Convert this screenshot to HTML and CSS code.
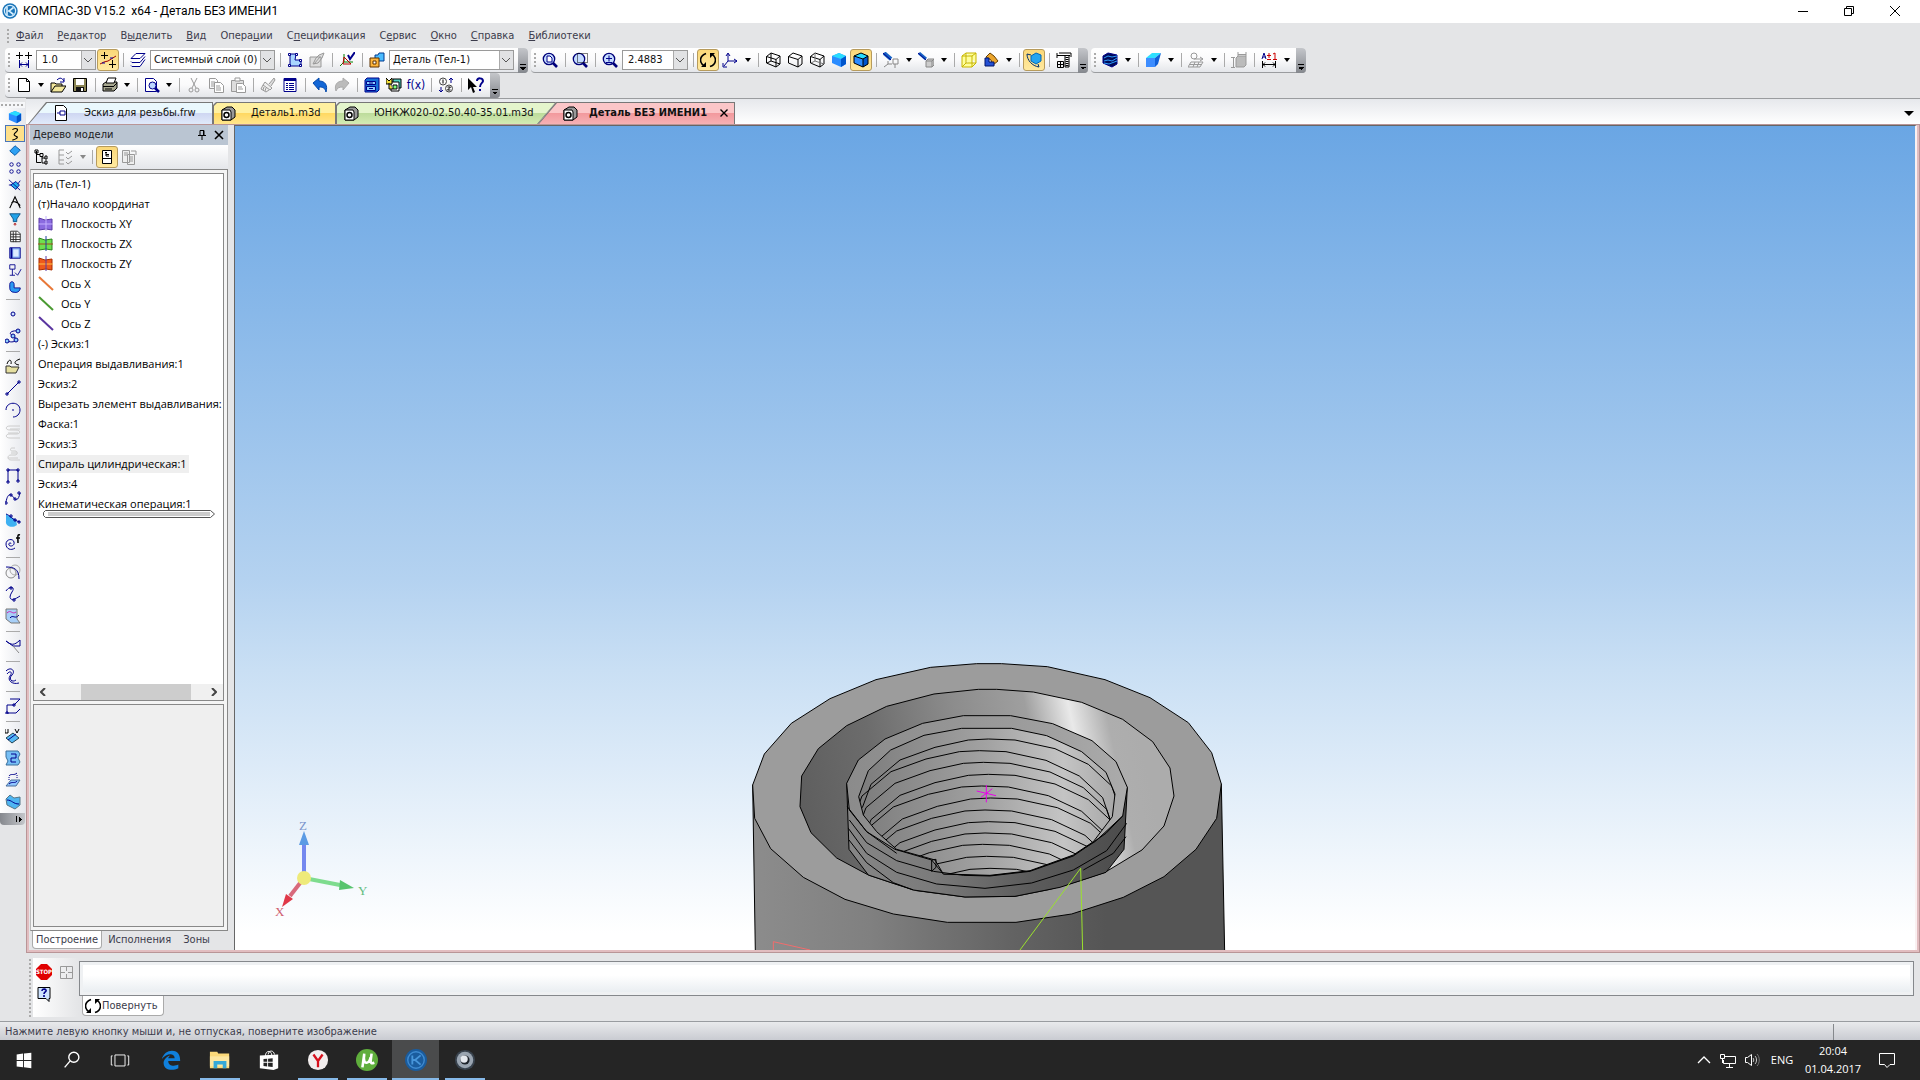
FILE: index.html
```html
<!DOCTYPE html>
<html lang="ru">
<head>
    <meta charset="UTF-8">
    <meta name="viewport" content="width=device-width, initial-scale=1.0">
    <title>КОМПАС-3D V15.2 x64 - Деталь БЕЗ ИМЕНИ1</title>
    <link rel="stylesheet" href="styles.css">
</head>
<body>

    <!-- shared icon shapes -->
    <svg class="sprite" aria-hidden="true">
        <symbol id="part" viewBox="0 0 16 16"><path d="M2 5l5-3h5l3 3v7l-4 3H2z" fill="#999" stroke="#000"/><path d="M2 5h8l1 2v8H2z" fill="#fff" stroke="#000"/><circle cx="6.500" cy="10" r="2.500" fill="none" stroke="#000" stroke-width="1.500"/></symbol>
        <symbol id="rotate" viewBox="0 0 16 16"><path d="M6 1.500C-1 4-1 11 4.500 14M10 14.500C17 12 17 5 11.500 2" fill="none" stroke="#000" stroke-width="1.600"/><path d="M1 15h5v-5zM15 1h-5v5z" fill="#000"/></symbol>
        <symbol id="kompas" viewBox="0 0 16 16"><circle cx="8" cy="8" r="7.700" fill="#1b75b8"/><circle cx="8" cy="8" r="5.600" fill="none" stroke="#d7efff" stroke-width="1.200"/><path d="M5 4v8M11.500 4.500L7 8l4.500 3.500M6 8h2" fill="none" stroke="#d7efff" stroke-width="1.600"/></symbol>
        <symbol id="lens" viewBox="0 0 16 16"><path d="M11 11l4 4" stroke="#00007a" stroke-width="2.600"/><circle cx="7" cy="7" r="5.700" fill="#c5dcff" stroke="#00007a" stroke-width="1.300"/></symbol>
        <symbol id="cube" viewBox="0 0 16 16"><path d="M1 4l7-3 7 3v8l-5 3-9-4z" fill="#2b8cff"/><path d="M1 4l7-3 7 3-5 3z" fill="#28dcff"/><path d="M10 7l5-3v8l-5 3z" fill="#0055cc"/></symbol>
    </svg>

    <header class="titlebar">
        <svg class="icon"><use href="#kompas"/></svg>
        <h1>КОМПАС-3D V15.2&nbsp; x64 - Деталь БЕЗ ИМЕНИ1</h1>
        <div class="window-buttons">
            <button aria-label="Свернуть"><svg class="icon" viewBox="0 0 16 16"><path d="M3 8.500h10" stroke="#000"/></svg></button>
            <button aria-label="Восстановить"><svg class="icon" viewBox="0 0 16 16"><path d="M3.500 5.500h7v7h-7zM5.500 5.500v-2h7v7h-2" stroke="#000"/></svg></button>
            <button aria-label="Закрыть"><svg class="icon" viewBox="0 0 16 16"><path d="M3 3l10 10M13 3L3 13" stroke="#000"/></svg></button>
        </div>
    </header>

    <nav class="menubar">
        <span class="grip"></span>
        <button><u>Ф</u>айл</button>
        <button><u>Р</u>едактор</button>
        <button>В<u>ы</u>делить</button>
        <button><u>В</u>ид</button>
        <button>Опера<u>ц</u>ии</button>
        <button>С<u>п</u>ецификация</button>
        <button>С<u>е</u>рвис</button>
        <button><u>О</u>кно</button>
        <button><u>С</u>правка</button>
        <button><u>Б</u>иблиотеки</button>
    </nav>

    <div class="toolbars">
        <div class="toolbar">
            <span class="grip"></span>
            <button class="tool" aria-label="Шаг курсора"><svg class="icon" viewBox="0 0 16 16"><path d="M3.500 0v7M0 3.500h7M12.500 0v7M9 3.500h7" stroke="#000"/><path d="M3.500 8v8M12.500 8v8M4 12.500h8M6 10.500l-2 2 2 2M10 10.500l2 2-2 2"/></svg></button>
            <select class="combo combo-short" aria-label="Шаг"><option>1.0</option></select>
            <button class="tool active" aria-label="Привязки"><svg class="icon" viewBox="0 0 16 16"><path d="M4.500 0v7M1 3.500h7M12.500 8v8M9 12.500h7" stroke="#000"/><path d="M0 12l4-2 4-1 8-5" stroke="#a00000"/><path d="M2 11h3M10 6h3" stroke="#00a"/></svg></button>
            <span class="sep"></span>
            <button class="tool" aria-label="Слои"><svg class="icon" viewBox="0 0 16 16"><path d="M6 1.500h9l-5 5H1zM1 9.500l1 1h8l5-6M1 13.500l1 1h8l5-7" fill="#fff"/></svg></button>
            <select class="combo" aria-label="Слой"><option>Системный слой (0)</option></select>
            <span class="sep"></span>
            <button class="tool" aria-label="Эскиз"><svg class="icon" viewBox="0 0 16 16"><path d="M3 2h6l-1 6h6v6H3z" fill="#a9d5ff"/><path d="M1.500 1.500h2v2h-2zM8.500 1.500h2v2h-2zM12.500 7.500h2v2h-2zM1.500 12.500h2v2h-2zM12.500 12.500h2v2h-2z" fill="#fff"/></svg></button>
            <button class="tool" aria-label="Редактировать эскиз"><svg class="icon gray" viewBox="0 0 16 16"><path d="M1 5h11v10H1zM4 12l3-6 3-3 5-2-2 5-4 5z" fill="#ddd"/><path d="M5 12l6-7"/></svg></button>
            <span class="sep"></span>
            <button class="tool" aria-label="Координаты"><svg class="icon" viewBox="0 0 16 16"><path d="M5 2v8l-4 4M5 10h9" stroke="#008000"/><path d="M5 5l7 7H4z" stroke="#b00"/><path d="M9 3l2 4 5-7" stroke-width="2"/></svg></button>
            <span class="sep"></span>
            <button class="tool" aria-label="Деталь"><svg class="icon" viewBox="0 0 16 16"><path d="M6 3h3l1-2h5v8H6z" fill="#4bbcff" stroke="#003a90"/><path d="M1 6h9v9H1z" fill="#ffb63c" stroke="#5d3100"/><path d="M4 9h3v3H4z" fill="#fff" stroke="#5d3100"/></svg></button>
            <select class="combo" aria-label="Состав"><option>Деталь (Тел-1)</option></select>
            <button class="overflow" aria-label="Ещё"></button>
        </div>

        <div class="toolbar">
            <span class="grip"></span>
            <button class="tool" aria-label="Показать всё"><svg class="icon" viewBox="0 0 16 16"><use href="#lens"/><path d="M5 4h3l2 2v4H5z" fill="#fff"/></svg></button>
            <span class="sep"></span>
            <button class="tool" aria-label="Рамкой"><svg class="icon" viewBox="0 0 16 16"><use href="#lens"/><path d="M5.500 1.500h10v9h-10z" stroke="#000" stroke-dasharray="1 1"/></svg></button>
            <span class="sep"></span>
            <button class="tool" aria-label="Масштаб"><svg class="icon" viewBox="0 0 16 16"><use href="#lens"/><path d="M4 6.500h6M7 3.500v6M4 10.500h6"/></svg></button>
            <select class="combo combo-scale" aria-label="Значение масштаба"><option>2.4883</option></select>
            <span class="sep"></span>
            <button class="tool active" aria-label="Повернуть"><svg class="icon"><use href="#rotate"/></svg></button>
            <button class="tool" aria-label="Ориентация"><svg class="icon" viewBox="0 0 16 16"><path d="M6 9V2M6 9h9M6 9l-4 5M4 4l2-3 2 3M12 7l3 2-3 2M1 11v4h4"/></svg></button>
            <button class="drop" aria-label="Список ориентаций"></button>
            <span class="sep"></span>
            <button class="tool" aria-label="Каркас"><svg class="icon" viewBox="0 0 16 16"><path d="M1.500 4.500L6 1l9 3v8l-4 3-9.500-4zM1.500 4.500L11 7.500l4-3.500M11 7.500V15M6 1v8l-4 2M6 9l9 3" stroke="#000"/></svg></button>
            <button class="tool" aria-label="Без невидимых линий"><svg class="icon" viewBox="0 0 16 16"><path d="M1.500 4.500L6 1l9 3v8l-4 3-9.500-4zM1.500 4.500L11 7.500l4-3.500M11 7.500V15" stroke="#000"/></svg></button>
            <button class="tool" aria-label="Невидимые линии тонкие"><svg class="icon" viewBox="0 0 16 16"><path d="M1.500 4.500L6 1l9 3v8l-4 3-9.500-4zM1.500 4.500L11 7.500l4-3.500M11 7.500V15" stroke="#000"/><path d="M6 1v8l-4 2M6 9l9 3" stroke="#777"/></svg></button>
            <button class="tool" aria-label="Полутоновое"><svg class="icon"><use href="#cube"/></svg></button>
            <button class="tool active" aria-label="Полутоновое с каркасом"><svg class="icon" viewBox="0 0 16 16"><use href="#cube"/><path d="M1 4l7-3 7 3v8l-5 3-9-4zM1 4l9 3 5-3M10 7v8" stroke="#000"/></svg></button>
            <span class="sep"></span>
            <button class="tool" aria-label="Скрыть объекты"><svg class="icon" viewBox="0 0 16 16"><path d="M1 1l7 6" stroke="#1762c4" stroke-width="4"/><path d="M0 1l8 7"/><path d="M10 7h5v5h-5zM12 12v4M5 9v3l-4 3M5 12h4" stroke="#888"/></svg></button>
            <button class="drop" aria-label="Список объектов"></button>
            <button class="tool" aria-label="Скрыть грани"><svg class="icon" viewBox="0 0 16 16"><path d="M1 1l7 6" stroke="#1762c4" stroke-width="3"/><path d="M0 1l8 7"/><path d="M8 9l2-2h6v6l-2 2H8zM8 9h6v6M14 9l2-2" fill="#ccc" stroke="#888"/></svg></button>
            <button class="drop" aria-label="Список граней"></button>
            <span class="sep"></span>
            <button class="tool" aria-label="Габарит"><svg class="icon" viewBox="0 0 16 16"><path d="M1 4l4-3h10v10l-4 4H1zM1 4h10v11M11 4l4-3M5 1v10H15M5 11l-4 4" fill="#ffff9b" stroke="#c7b500"/></svg></button>
            <button class="tool" aria-label="Сечение"><svg class="icon" viewBox="0 0 16 16"><path d="M3 5l4-4 4 3 4 5-5 4-2-5z" fill="#eba52c" stroke="#684000"/><path d="M2 6h4v4h5v4H2z" fill="#2450d4" stroke="#00146b"/></svg></button>
            <button class="drop" aria-label="Список сечений"></button>
            <span class="sep"></span>
            <button class="tool active" aria-label="Перестроить"><svg class="icon" viewBox="0 0 16 16"><path d="M5 4l5-3 5 2v6l-5 3-5-3z" fill="#26a5f0" stroke="#0067b8"/><path d="M1 2c0 6 5 12 12 13M1 2l4 1M13 15l-1-3" stroke="#003070"/></svg></button>
            <span class="sep"></span>
            <button class="tool" aria-label="Размеры"><svg class="icon" viewBox="0 0 16 16"><path d="M1 3.500h13M1 1v5M3 1h12v4M9 3v12h4V4M1.500 9.500h6v6h-6zM1.500 12.500h6M4.500 9.500v6" stroke="#000"/><path d="M11 5v10" stroke="#000" stroke-width="3" stroke-dasharray="1 1"/></svg></button>
            <button class="overflow" aria-label="Ещё"></button>
        </div>

        <div class="toolbar">
            <span class="grip"></span>
            <button class="tool" aria-label="Материал"><svg class="icon" viewBox="0 0 16 16"><path d="M1 4l5-3 9 2v9l-5 3-9-4z" fill="#000b58"/><path d="M2 6l4-2 4 1 5-1M2 9l4-1 4 1 5-3M2 11l5 1 8-3" stroke="#2e9cff"/></svg></button>
            <button class="drop" aria-label="Список материалов"></button>
            <span class="sep"></span>
            <button class="tool" aria-label="Выдавливание"><svg class="icon plain" viewBox="0 0 16 16"><path d="M1 6h9v9H1z" fill="#3d8dff"/><path d="M1 6l6-5h9l-6 5z" fill="#2ee0ff"/><path d="M10 6l6-5-3 11-3 3z" fill="#1060d8"/></svg></button>
            <button class="drop" aria-label="Список операций"></button>
            <span class="sep"></span>
            <button class="tool" aria-label="Вид"><svg class="icon gray" viewBox="0 0 16 16"><circle cx="6" cy="4" r="3"/><path d="M6 7h9M12 5l3 2-3 2M3 10h12l-3 5H0zM1 12.500h13M7 10l-2 5M11 10l-2 5"/></svg></button>
            <button class="drop" aria-label="Список видов"></button>
            <span class="sep"></span>
            <button class="tool" aria-label="Габаритные размеры"><svg class="icon gray" viewBox="0 0 16 16"><path d="M5 6l2-2h8v9l-2 2H5z" fill="#bbb"/><path d="M0 5.500h4M0 15.500h4M2.500 6v9M7 0v4M15 0v4M7 2.500h8"/></svg></button>
            <span class="sep"></span>
            <button class="tool" aria-label="Допуски"><svg class="icon" viewBox="0 0 16 16"><path d="M1 7l2-6 2 6M2 5h3"/><path d="M6 3.500h4M8 1v5M6 7.500h4M12 2l2-1v7M12 7.500h4" stroke="#c00"/><path d="M1.500 9v7M14.500 9v7M2 12.500h12M4 10.500l-2 2 2 2M12 10.500l2 2-2 2" stroke="#000"/></svg></button>
            <button class="drop" aria-label="Список допусков"></button>
            <button class="overflow" aria-label="Ещё"></button>
        </div>
    </div>

    <div class="toolbars">
        <div class="toolbar toolbar-file">
            <span class="grip"></span>
            <button class="tool" aria-label="Создать"><svg class="icon" viewBox="0 0 16 16"><path d="M2.500 1.500h8l3 3v10h-11zM10.500 1.500v3h3" fill="#fff" stroke="#000"/></svg></button>
            <button class="drop" aria-label="Список документов"></button>
            <button class="tool" aria-label="Открыть"><svg class="icon" viewBox="0 0 16 16"><path d="M1 6h4l1 1h6v2h4l-4 6H1z" fill="#f2e79b" stroke="#000"/><path d="M1 15l4-6h7" stroke="#000"/><path d="M7 3c3-3 5-2 7 1M14 1v4h-4"/></svg></button>
            <button class="tool" aria-label="Сохранить"><svg class="icon" viewBox="0 0 16 16"><path d="M1.500 1.500h13v13h-13z" fill="#8c8654" stroke="#000"/><path d="M4 2h8v6H4z" fill="#fff"  stroke="none"/><path d="M4 10h8v5H4z" fill="#111" stroke="none"/><path d="M9 11h2v3H9z" fill="#fff" stroke="none"/></svg></button>
            <span class="sep"></span>
            <button class="tool" aria-label="Печать"><svg class="icon" viewBox="0 0 16 16"><path d="M1 7l3-2h11v6l-3 3H1z" fill="#a8a890" stroke="#000"/><path d="M4 6l2-5h8l-2 5z" fill="#fff" stroke="#000"/><path d="M1 9.500h11M12 9l3-3M3 12h7" stroke="#000"/></svg></button>
            <button class="drop" aria-label="Параметры печати"></button>
            <span class="sep"></span>
            <button class="tool" aria-label="Просмотр"><svg class="icon" viewBox="0 0 16 16"><path d="M1.500 1.500h8l3 3v10h-11z" fill="#fff"/><circle cx="8.500" cy="8.500" r="3.500" fill="#bcd7ff"/><path d="M11 11l4 4" stroke-width="2.500"/></svg></button>
            <button class="drop" aria-label="Параметры просмотра"></button>
            <span class="sep"></span>
            <button class="tool" aria-label="Вырезать"><svg class="icon gray" viewBox="0 0 16 16"><path d="M5 1l5 10M11 1L6 11"/><circle cx="5" cy="13" r="2"/><circle cx="11" cy="13" r="2"/></svg></button>
            <button class="tool" aria-label="Копировать"><svg class="icon gray" viewBox="0 0 16 16"><path d="M1.500 1.500h6l2 2v8h-8zM3 5h4M3 7h4M3 9h4" /><path d="M6.500 5.500h6l3 3v7h-9z" fill="#fff"/><path d="M8 9h4M8 11h5M8 13h5"/></svg></button>
            <button class="tool" aria-label="Вставить"><svg class="icon gray" viewBox="0 0 16 16"><path d="M1.500 3.500h12v11h-12z" fill="#ddd"/><path d="M5 4V1h5v3z" fill="#fff"/><path d="M6.500 6.500h6l3 3v6h-9z" fill="#fff"/><path d="M8 10h4M8 12h5"/></svg></button>
            <span class="sep"></span>
            <button class="tool" aria-label="Копировать свойства"><svg class="icon gray" viewBox="0 0 16 16"><path d="M9 7l5-6 1 2-4 6" fill="#ddd"/><path d="M5 5l7 6-2 2-7-5zM3 8l-2 4 5 3 3-2M4 10l-1 3M6 11l-1 3" fill="#eee"/></svg></button>
            <button class="tool" aria-label="Свойства"><svg class="icon" viewBox="0 0 16 16"><path d="M2 1.500h12v13H2z" fill="#fff"/><path d="M2 2.500h12" stroke-width="3"/><path d="M4 6.500h2M7 6.500h5M4 8.500h2M7 8.500h5M4 10.500h2M7 10.500h5M4 12.500h2M7 12.500h5"/></svg></button>
            <span class="sep"></span>
            <button class="tool" aria-label="Отменить"><svg class="icon" viewBox="0 0 16 16"><path d="M1 6l6-5v3c6 0 9 4 7 11-1-4-3-5-7-5v3z" fill="#1266d6" stroke="#0047ab"/></svg></button>
            <button class="tool" aria-label="Повторить"><svg class="icon" viewBox="0 0 16 16"><path d="M15 6L9 1v3C3 4 0 8 2 14c1-3 3-4 7-4v3z" fill="#bbb" stroke="#aaa"/></svg></button>
            <span class="sep"></span>
            <button class="tool" aria-label="Библиотеки"><svg class="icon" viewBox="0 0 16 16"><path d="M1 3l2-2h12v12l-2 2H1z" fill="#1670d8"/><path d="M2.500 4.500h9v3h-9zM2.500 9.500h9v4h-9zM5 6h4M5 11.500h4" fill="#8fd0ff"/></svg></button>
            <button class="tool" aria-label="Переменные"><svg class="icon" viewBox="0 0 16 16"><path d="M7 2h8v9H7z" fill="#4fd0c0" stroke="#000"/><path d="M5 5h8v9H5z" fill="#fff" stroke="#000"/><path d="M0 1l3 3 3-3v6H0zM3 6v6h4" fill="#f2df39" stroke="#000"/><path d="M7 8h4v4H7z" fill="#7dff7d" stroke="#000"/></svg></button>
            <button class="tool fx" aria-label="Функции">f(x)</button>
            <span class="sep"></span>
            <button class="tool" aria-label="Порядок"><svg class="icon" viewBox="0 0 16 16"><circle cx="5" cy="4.500" r="3.500" stroke="#444"/><circle cx="11" cy="11.500" r="3.500" stroke="#444"/><path d="M5 2.500v4M9.500 10h3l-3 3h3" stroke="#000"/><path d="M13 1v5M11 3l2-2 2 2M3 10v5M1 13l2 2 2-2"/></svg></button>
            <span class="sep"></span>
            <button class="tool" aria-label="Справка"><svg class="icon" viewBox="0 0 16 16"><path d="M0 1v12l3-3 2 6 2-1-2-5h4z" fill="#000" stroke="none"/><path d="M9 4c0-4 6-3 6 0 0 2-3 2-3 6M12 12v2" stroke-width="2"/></svg></button>
            <button class="overflow" aria-label="Ещё"></button>
        </div>
    </div>

    <main class="workspace">
        <aside class="compact-panel">
            <span class="grip-top"></span>
            <div class="modes">
                <button aria-label="Редактирование детали"><svg class="icon"><use href="#cube"/></svg></button>
                <button class="active" aria-label="Пространственные кривые"><svg class="icon" viewBox="0 0 16 16"><path d="M5 3c5-3 8 0 4 3s-1 4 1 5-1 3-5 4" stroke="#000" stroke-width="1.300"/></svg></button>
                <button aria-label="Поверхности"><svg class="icon" viewBox="0 0 16 16"><path d="M2 8l6-6 6 5-6 6z" fill="#2ea1f3" stroke="#0052a0"/></svg></button>
                <button aria-label="Массивы"><svg class="icon" viewBox="0 0 16 16"><circle cx="4" cy="4" r="2"/><circle cx="12" cy="4" r="2"/><circle cx="4" cy="12" r="2"/><circle cx="12" cy="12" r="2"/></svg></button>
                <button aria-label="Вспомогательная геометрия"><svg class="icon" viewBox="0 0 16 16"><path d="M3 8l6-4 4 4-4 5z" fill="#24b2ef"/><path d="M1 2l13 12M14 3l-3 4M1 8h3"/></svg></button>
                <button aria-label="Измерения"><svg class="icon" viewBox="0 0 16 16"><path d="M2 15L8 2l6 13M4 9c2-2 6-2 10 3" stroke="#000" stroke-width="1.300"/></svg></button>
                <button aria-label="Фильтры"><svg class="icon" viewBox="0 0 16 16"><path d="M2 2h12l-4 6v3H6V8z" fill="#21a2e8" stroke="#0a4f80"/><circle cx="8" cy="14" r="1" stroke="#a00"/></svg></button>
                <button aria-label="Спецификация"><svg class="icon" viewBox="0 0 16 16"><path d="M3 2.500h8l3 3v9H3zM3 6h11M3 9h11M3 12h11M6 3v12M9 3v12" fill="#fff" stroke="#222"/></svg></button>
                <button aria-label="Отчёты"><svg class="icon" viewBox="0 0 16 16"><path d="M2 2h12v12H2z" fill="#8cb6f5"/><path d="M4 2v12" stroke-width="2"/><path d="M6 4h6v8H6z" fill="#dcecff" stroke="none"/></svg></button>
                <button aria-label="Элементы оформления"><svg class="icon" viewBox="0 0 16 16"><path d="M2 2h6v5H2zM5 7v7M2 14h6M8 11l3 3 4-7"/></svg></button>
                <button aria-label="Листовое тело"><svg class="icon" viewBox="0 0 16 16"><path d="M2 5c0-4 5-4 5 0v4h7c0 4-4 6-7 5-4 0-5-3-5-5z" fill="#2d9bf1"/></svg></button>
            </div>
            <span class="line"></span>
            <div class="tools">
                <button aria-label="Точка"><svg class="icon" viewBox="0 0 16 16"><circle cx="8" cy="8" r="2" fill="#cfe4ff"/></svg></button>
                <button aria-label="Группа точек"><svg class="icon" viewBox="0 0 16 16"><path d="M2 13c8 3 12-2 6-5S7 2 14 3"/><g fill="#8fd0ff"><circle cx="2" cy="13" r="2"/><circle cx="8" cy="8" r="2"/><circle cx="13" cy="3" r="2"/><circle cx="11" cy="12" r="2"/></g></svg></button>
            </div>
            <span class="line"></span>
            <div class="tools">
                <button aria-label="Кривая из файла"><svg class="icon" viewBox="0 0 16 16"><path d="M1 8h4l1 1h8l-3 6H1z" fill="#e5dfa0" stroke="#333"/><path d="M2 6c2-6 5-4 4 0M15 1c-6 2-7 5-1 6" stroke="#000"/></svg></button>
                <button aria-label="Отрезок"><svg class="icon" viewBox="0 0 16 16"><path d="M2 14L14 2"/><path d="M1 13h2v2H1zM13 1h2v2h-2z"/></svg></button>
                <button aria-label="Дуга"><svg class="icon" viewBox="0 0 16 16"><path d="M1 8c0-9 14-9 14 0 0 4-3 7-7 7"/><path d="M8 7v2"/></svg></button>
                <button aria-label="Спираль"><svg class="icon faint" viewBox="0 0 16 16"><path d="M15 2H5c-5 0-5 4 0 4h6c5 0 5 4 0 4H5c-5 0-5 4 0 4h10M15 5H5M13 9H3"/></svg></button>
                <button aria-label="Спираль коническая"><svg class="icon faint" viewBox="0 0 16 16"><path d="M10 2H7c-2 0-2 3 0 3h3c3 0 3 4 0 4H6c-4 0-4 5 0 5h9M6 7h6M3 12h10"/></svg></button>
                <button aria-label="Ломаная"><svg class="icon" viewBox="0 0 16 16"><path d="M3 14V2h10v11"/><path d="M2 1h2v2H2zM12 1h2v2h-2zM2 13h2v2H2zM12 12h2v2h-2z"/></svg></button>
                <button aria-label="Сплайн"><svg class="icon" viewBox="0 0 16 16"><path d="M1 12c2-10 5-8 8-4s5 0 6-5"/><path d="M0 12h2v2H0zM5 4h2v2H5zM9 8h2v2H9zM13 2h2v2h-2z"/></svg></button>
                <button aria-label="Сплайн на поверхности"><svg class="icon" viewBox="0 0 16 16"><path d="M1 2l10 6 1 5c-5 4-12 1-11-4z" fill="#3eb1f2" stroke="none"/><path d="M1 2c4 1 6 6 14 8"/><path d="M5 3h2v2H5zM9 7h2v2H9zM13 9h2v2h-2z"/></svg></button>
                <button aria-label="Кривая по закону"><svg class="icon" viewBox="0 0 16 16"><path d="M6 10c0-2-3-1-2 1s6 1 5-3-8-3-8 2 5 7 9 4"/><path d="M15 1c-3-1-2 2-2 8M11 4h4" stroke="#000" stroke-width="1.500"/></svg></button>
            </div>
            <span class="line"></span>
            <div class="tools">
                <button aria-label="Скругление"><svg class="icon" viewBox="0 0 16 16"><circle cx="6" cy="9" r="5" stroke="#888"/><circle cx="10" cy="6" r="5" stroke="#aaa"/><path d="M1 3c8 0 13 2 13 12"/></svg></button>
                <button aria-label="Соединение кривых"><svg class="icon" viewBox="0 0 16 16"><path d="M1 5c3-5 10-5 6 1s-2 11 8 4"/><path d="M5 1h2v2H5zM8 13h2v2H8z"/></svg></button>
                <button aria-label="Кривая на поверхности"><svg class="icon" viewBox="0 0 16 16"><path d="M1 1h11v10l3 4H6l-5-4z" fill="#a7cff8" stroke="#777"/><path d="M2 5c4-4 5 2 9-1" stroke="#d020b0"/><path d="M5 10c3-4 5 2 9-3"/></svg></button>
            </div>
            <span class="line"></span>
            <div class="tools">
                <button aria-label="Линия пересечения"><svg class="icon" viewBox="0 0 16 16"><path d="M1 3c5 4 8 5 14-1v6H8z"/><path d="M8 8l6 7" stroke="#888"/></svg></button>
            </div>
            <span class="line"></span>
            <div class="tools">
                <button aria-label="Эквидистанта"><svg class="icon" viewBox="0 0 16 16"><path d="M1 3c5-5 10 0 6 4s0 8 4 5M2 6c3-4 6-2 3 2s2 9 9 7"/></svg></button>
            </div>
            <span class="line"></span>
            <div class="tools">
                <button aria-label="Контур"><svg class="icon" viewBox="0 0 16 16"><path d="M5 1h10L9 7H2v8h9l4-4"/><path d="M8 6h2v2H8zM1 14h2v2H1z"/></svg></button>
            </div>
            <span class="line"></span>
            <div class="tools">
                <button aria-label="Изопараметрическая кривая"><svg class="icon" viewBox="0 0 16 16"><path d="M0 1v4h3V1M10 1l2 4 2-4" stroke="#000"/><path d="M1 10l7-5 6 5-7 5z" fill="#55b8f5" stroke="#245"/><path d="M3 12l8-6"/></svg></button>
                <button aria-label="Контур поверхности"><svg class="icon" viewBox="0 0 16 16"><path d="M1 1h12l2 3-2 4 2 4-2 3H1l2-4-2-4z" fill="#76bff5" stroke="#3a6f9a"/><path d="M6 4h5v4H6v4h5"/></svg></button>
                <button aria-label="Проекционная кривая"><svg class="icon" viewBox="0 0 16 16"><path d="M4 4c2-3 5 0 8-3" /><path d="M4 5v4M12 3v4" stroke-dasharray="1 1"/><path d="M1 14l5-6h9l-4 6z" fill="#8fc6ff" stroke="#4a6f9a"/><path d="M4 12c3-3 6 0 8-3"/></svg></button>
                <button aria-label="Линия разъёма"><svg class="icon" viewBox="0 0 16 16"><path d="M1 5l4-4 4 3 6-1v8l-5 4-8-4z" fill="#4eb5f2" stroke="#578"/><path d="M2 6c5 0 6 4 12 4"/></svg></button>
            </div>
            <button class="panel-end" aria-label="Развернуть панель"></button>
        </aside>

        <section class="document">
            <div class="doc-tabs">
                <button class="doc-tab tab-blue"><svg class="icon" viewBox="0 0 16 16"><path d="M2.500.5h8l3 3v12h-11z" fill="#fff" stroke="#000"/><path d="M7 6h5v4H7zM4 8h3"/></svg><span>Эскиз для резьбы.frw</span></button>
                <button class="doc-tab tab-yellow"><svg class="icon"><use href="#part"/></svg><span>Деталь1.m3d</span></button>
                <button class="doc-tab tab-green"><svg class="icon"><use href="#part"/></svg><span>ЮНКЖ020-02.50.40-35.01.m3d</span></button>
                <button class="doc-tab tab-red"><svg class="icon"><use href="#part"/></svg><span>Деталь БЕЗ ИМЕНИ1</span><svg class="close" viewBox="0 0 8 8"><path d="M.5.5l7 7M7.500.5l-7 7" stroke="#000" stroke-width="1.400"/></svg></button>
                <button class="tab-list" aria-label="Список документов"></button>
            </div>

            <div class="doc-body">
                <div class="side">
                    <div class="side-title">
                        <h2>Дерево модели</h2>
                        <button aria-label="Закрепить"><svg viewBox="0 0 10 10"><path d="M3 5.500V.5h4v5M1 5.500h8M5 6v4M6.500 1v4" stroke="#000"/></svg></button>
                        <button aria-label="Закрыть"><svg viewBox="0 0 10 10"><path d="M1 1l8 8M9 1L1 9" stroke="#000" stroke-width="1.600"/></svg></button>
                    </div>
                    <div class="side-tools">
                        <button class="tool" aria-label="Структура"><svg class="icon" viewBox="0 0 16 16"><path d="M2.500 2v11.500H7M3 5.500h3M6 4.500h3v3H6zM8 8v6M11 7h2v3h-2zM11 12h2v3h-2zM1 1h3v3H1zM8 9h3M8 14h3" stroke="#000"/></svg></button>
                        <button class="tool" aria-label="Состав"><svg class="icon gray" viewBox="0 0 16 16"><path d="M1 1h5M1 1v14M1 6h5M1 11h5M1 15h5M8 3l2 2 4-3M8 8l2 2 4-3M8 13l2 2 4-3"/></svg></button>
                        <button class="drop drop-gray" aria-label="Список состава"></button>
                        <span class="sep"></span>
                        <button class="tool active" aria-label="Дерево"><svg class="icon" viewBox="0 0 16 16"><path d="M3.500 1.500h9v13h-9zM3.500 9.500h9" fill="#fff" stroke="#000"/><path d="M6 3.500h2M7 4v3h3M7 5.500h3" stroke="#000"/></svg></button>
                        <button class="tool" aria-label="Отношения"><svg class="icon gray" viewBox="0 0 16 16"><path d="M1.500 1.500h7v12h-7zM6.500 5.500h7v10h-7z" fill="#eee"/><path d="M3 4h4M3 6h3M8 8h4M8 10h4M8 12h4M10 2h5v4"/></svg></button>
                    </div>
                    <div class="side-box">
                        <div class="tree-box">
                            <ul class="tree">
                                <li class="root">аль (Тел-1)</li>
                                <li><span>(т)Начало координат</span></li>
                                <li class="child"><svg class="icon" viewBox="0 0 16 16"><path d="M1 2l6 2 7-1v11l-6-1-7 1z" fill="#8b6be0" stroke="#5a3aa5"/><path d="M0 8h15M8 0v15" stroke="#c4b0ff"/></svg>Плоскость XY</li>
                                <li class="child"><svg class="icon" viewBox="0 0 16 16"><path d="M1 2l6 2 7-1v11l-6-1-7 1z" fill="#6fe04f" stroke="#2d8420"/><path d="M0 8h15" stroke="#a44a20"/><path d="M8 0v15" stroke="#1e40a0"/></svg>Плоскость ZX</li>
                                <li class="child"><svg class="icon" viewBox="0 0 16 16"><path d="M1 2l6 2 7-1v11l-6-1-7 1z" fill="#ee5a1c" stroke="#a62c00"/><path d="M0 8h15" stroke="#ffc04a"/><path d="M8 0v15" stroke="#5a3aa5"/></svg>Плоскость ZY</li>
                                <li class="child"><svg class="icon" viewBox="0 0 16 16"><path d="M1 1l14 13" stroke="#e87838" stroke-width="2"/></svg>Ось X</li>
                                <li class="child"><svg class="icon" viewBox="0 0 16 16"><path d="M1 1l14 13" stroke="#4b9a32" stroke-width="2"/></svg>Ось Y</li>
                                <li class="child"><svg class="icon" viewBox="0 0 16 16"><path d="M1 1l14 13" stroke="#5a35a0" stroke-width="2"/></svg>Ось Z</li>
                                <li><span>(-) Эскиз:1</span></li>
                                <li><span>Операция выдавливания:1</span></li>
                                <li><span>Эскиз:2</span></li>
                                <li><span>Вырезать элемент выдавливания:</span></li>
                                <li><span>Фаска:1</span></li>
                                <li><span>Эскиз:3</span></li>
                                <li><span class="selected">Спираль цилиндрическая:1</span></li>
                                <li><span>Эскиз:4</span></li>
                                <li><span>Кинематическая операция:1</span></li>
                            </ul>
                            <svg class="rollback" viewBox="0 0 172 8" preserveAspectRatio="none"><path d="M2.500.5h165l4 3.500-4 3.500h-165l-2-2v-3z" fill="#fff" stroke="#555"/><path d="M5 3h162M5 5h162" stroke="#999"/></svg>
                            <div class="hscroll">
                                <button aria-label="Влево"><svg viewBox="0 0 6 8"><path d="M5 0L1 4l4 4" stroke="#444" stroke-width="2"/></svg></button>
                                <span class="track"><span class="thumb"></span></span>
                                <button aria-label="Вправо"><svg viewBox="0 0 6 8"><path d="M1 0l4 4-4 4" stroke="#444" stroke-width="2"/></svg></button>
                            </div>
                        </div>
                        <div class="relations"></div>
                    </div>
                    <div class="side-tabs">
                        <button class="current">Построение</button>
                        <button>Исполнения</button>
                        <button>Зоны</button>
                    </div>
                </div>

                <div class="viewport">
                    <svg class="scene" viewBox="235 126 1680 824" preserveAspectRatio="xMidYMax meet">
                        <defs>
                            <linearGradient id="g-body"><stop offset="0" stop-color="#8c8c8c"/><stop offset=".25" stop-color="#808080"/><stop offset=".55" stop-color="#636363"/><stop offset=".75" stop-color="#555"/><stop offset="1" stop-color="#555"/></linearGradient>
                            <linearGradient id="g-chamfer" gradientUnits="userSpaceOnUse" x1="210" y1="600" x2="1250" y2="380"><stop offset="0" stop-color="#5d5d5d"/><stop offset=".25" stop-color="#6c6c6c"/><stop offset=".5" stop-color="#8c8c8c"/><stop offset=".7" stop-color="#9f9f9f"/><stop offset=".82" stop-color="#e9e9e9"/><stop offset=".92" stop-color="#aeaeae"/><stop offset="1" stop-color="#acacac"/></linearGradient>
                            <linearGradient id="g-thread"><stop offset="0" stop-color="#868686"/><stop offset=".3" stop-color="#7b7b7b"/><stop offset=".65" stop-color="#5c5c5c"/><stop offset="1" stop-color="#4c4c4c"/></linearGradient>
                            <linearGradient id="g-ring"><stop offset="0" stop-color="#8b8b8b"/><stop offset=".6" stop-color="#9b9b9b"/><stop offset="1" stop-color="#ababab"/></linearGradient>
                            <linearGradient id="g-hole"><stop offset="0" stop-color="#7c7c7c"/><stop offset=".5" stop-color="#a2a2a2"/><stop offset=".8" stop-color="#c4c4c4"/><stop offset="1" stop-color="#a8a8a8"/></linearGradient>
                            <clipPath id="hole"><path d="M386 470L415 392 482 330 582 286 695 265H845L950 287 1055 335 1128 397 1155 462 1147 530 1090 605 1030 645 900 692 780 706 640 702 615 660 500 628 440 575 400 525z"/></clipPath>
                            <path id="turn" d="M-378 205L-352 135-265 62-160 24-60 2 0-1 80 2 200 28 300 75 370 140 392 205"/>
                        </defs>
                        <g class="part" transform="translate(730 640) scale(.3333333)">
                            <path d="M68 435L76 935H1484L1474 432z" fill="url(#g-body)"/>
                            <path d="M68 435L103 342 184 250 300 176 438 119 602 82 740 71H815L952 80 1125 119 1260 173 1375 248 1445 338 1474 432 1460 535 1398 628 1302 710 1180 772 1025 822 858 847H652L490 822 345 778 220 712 122 626 74 535z" fill="#9c9c9c"/>
                            <path d="M210 500L215 408 265 326 350 257 470 199 612 162 745 148H800L910 156 1055 187 1178 238 1268 305 1320 384 1332 468 1302 558 1236 630 1125 697 1050 722 960 748 855 769 705 771 560 752 490 730 415 705 320 654 243 578z" fill="url(#g-chamfer)"/>
                            <path d="M350 430L357 628 415 705 550 750 705 771 855 769 990 742 1128 697 1182 628 1192 442 780 350z" fill="url(#g-thread)"/>
                            <path d="M350 430L385 360 465 297 578 250 700 227H842L968 251 1086 302 1158 365 1192 442 1178 528 1095 605 1030 645 900 692 780 706 640 702 605 660 495 628 410 575 358 510z" fill="url(#g-ring)"/>
                            <path d="M386 470L415 392 482 330 582 286 695 265H845L950 287 1055 335 1128 397 1155 462 1147 530 1090 605 1030 645 900 692 780 706 640 702 615 660 500 628 440 575 400 525z" fill="url(#g-hole)"/>
                            <g clip-path="url(#hole)" fill="none">
                                <use href="#turn" x="775" y="298"/><use href="#turn" x="748" y="333"/>
                                <use href="#turn" x="760" y="368"/><use href="#turn" x="775" y="404"/>
                                <use href="#turn" x="755" y="439"/><use href="#turn" x="782" y="475"/>
                                <use href="#turn" x="765" y="511"/><use href="#turn" x="775" y="546"/>
                                <use href="#turn" x="765" y="580"/><use href="#turn" x="758" y="614"/>
                                <use href="#turn" x="770" y="650"/><use href="#turn" x="780" y="686"/>
                            </g>
                            <path d="M352 500L410 575 500 640M358 540L410 608 500 662 610 694 700 706 780 708 900 694 1030 648M355 565L410 640 500 697 620 732 765 745 905 729 1030 690 1130 632 1190 550M357 600L410 668 490 728 550 750M1178 528L1128 580 1030 648M1188 590L1150 640 1060 690 M605 660V694L618 682V658z" fill="none"/>
                            <path d="M130 935V905L240 930" fill="none" stroke="#f26c6c"/>
                            <path d="M870 930L1052 685 1058 935" fill="none" stroke="#9be22d"/>
                            <path d="M769 435V487M740 453L798 467M752 473L787 446" fill="none" stroke="#e800e8"/>
                        </g>
                        <g class="axes">
                            <path d="M304 877V842" stroke="#7488ef" stroke-width="4"/><path d="M299 845l5-14 5 14z" fill="#5b9be4"/>
                            <path d="M304 878l36 7" stroke="#7edc8e" stroke-width="4"/><path d="M340 880l14 8-15 2z" fill="#58c46e"/>
                            <path d="M304 878l-14 18" stroke="#d86a7c" stroke-width="4"/><path d="M286 894l7 5-11 8z" fill="#e03848"/>
                            <circle cx="304" cy="878" r="7" fill="#eeea7a"/>
                            <text x="299" y="830" fill="#7a94cc">Z</text>
                            <text x="358" y="895" fill="#62bd80">Y</text>
                            <text x="275" y="916" fill="#cf6070">X</text>
                        </g>
                    </svg>
                </div>
            </div>
        </section>
    </main>

    <section class="property-panel">
        <span class="grip-tall"></span>
        <div class="property-buttons">
            <button aria-label="Прервать команду"><svg class="icon" viewBox="0 0 16 16"><path d="M5 0h6l5 5v6l-5 5H5l-5-5V5z" fill="#e00000" stroke="none"/><text x="8" y="10" class="stop">STOP</text></svg></button>
            <button aria-label="Запомнить состояние"><svg class="icon gray" viewBox="0 0 16 16"><path d="M2.500 2.500h12v12h-12zM8.500 3v4M8.500 10v4M3 8.500h4M10 8.500h4"/></svg></button>
            <button aria-label="Справка"><svg class="icon" viewBox="0 0 16 16"><path d="M2 1.500h12v11h-1v3l-3-3H2z" fill="#cfe4ff" stroke="#000"/><path d="M6 5c0-3 5-2 4 0 0 1-2 1-2 3M8 9v2" stroke-width="1.600"/></svg></button>
        </div>
        <div class="property-main">
            <div class="property-field"></div>
            <button class="property-tab"><svg class="icon"><use href="#rotate"/></svg>Повернуть</button>
        </div>
    </section>

    <div class="statusbar"><span>Нажмите левую кнопку мыши и, не отпуская, поверните изображение</span></div>

    <footer class="taskbar">
        <button class="task" aria-label="Пуск"><svg viewBox="0 0 24 24"><path d="M4 6l7-1v7H4zM12 5l8-1v8h-8zM4 13h7v7l-7-1zM12 13h8v8l-8-1z" fill="#fff"/></svg></button>
        <button class="task" aria-label="Поиск"><svg viewBox="0 0 24 24"><circle cx="14" cy="9" r="5.500" stroke="#fff" stroke-width="1.500"/><path d="M10 13l-6 7" stroke="#fff" stroke-width="1.500"/></svg></button>
        <button class="task" aria-label="Представление задач"><svg viewBox="0 0 24 24"><path d="M6.500 6.500h11v12h-11zM4 7.500H2.500v10H4M20 7.500h1.500v10H20" stroke="#fff"/></svg></button>
        <button class="task app" aria-label="Edge"><svg viewBox="0 0 24 24"><path d="M2 11C4 5 8 2 13 2c7 0 9 5 9 11H9c0 6 7 6 11 4v4C12 25 3 22 4 14c1-4 4-6 7-7-2 2-2 3-2 3h7c0-6-9-6-14 1z" fill="#1080dc"/></svg></button>
        <button class="task app running" aria-label="Проводник"><svg viewBox="0 0 24 24"><path d="M1 3h8l1 2h12v16H1z" fill="#fbd979"/><path d="M1 8h21v11H1z" fill="#fde7a0"/><path d="M5 13h14v8h-4v-4H9v4H5z" fill="#35a9d8"/></svg></button>
        <button class="task app" aria-label="Магазин"><svg viewBox="0 0 24 24"><path d="M2 7l20-1v15l-5 2-15-2z" fill="#fff"/><path d="M8 8c0-7 7-7 7-1M11 6c1-5 6-5 7 0" stroke="#fff"/><path d="M6 11l4-.5V14H6zM11 10.500l5-.5v4h-5zM6 15h4v4l-4-.5zM11 15h5v4.500l-5-.5z" fill="#252525"/></svg></button>
        <button class="task app running" aria-label="Яндекс"><svg viewBox="0 0 24 24"><circle cx="12" cy="12" r="11" fill="#f2eeee"/><path d="M7 6l5 7 5-7M12 12v8" stroke="#d6101c" stroke-width="2.500"/></svg></button>
        <button class="task app running" aria-label="uTorrent"><svg viewBox="0 0 24 24"><circle cx="12" cy="12" r="12" fill="#5fae3c"/><path d="M9 5L7 20M9 6c-2 12 5 11 7 3M17 5l-1 8c0 3 1 3 4 2" stroke="#fff" stroke-width="2.800"/></svg></button>
        <button class="task app running open" aria-label="КОМПАС-3D"><svg viewBox="0 0 24 24"><circle cx="12" cy="12" r="12" fill="#1a5c9e"/><circle cx="12" cy="12" r="9" stroke="#3f8bd0" stroke-width="1.500"/><path d="M8 7v10M17 7l-6 5 6 5M9 12h3" stroke="#4896da" stroke-width="2"/></svg></button>
        <button class="task app running" aria-label="Камера"><svg viewBox="0 0 24 24"><circle cx="12" cy="12" r="11" fill="#39434e"/><circle cx="12" cy="12" r="9" fill="#9aa5b1"/><circle cx="12" cy="12" r="5" fill="#1d232b"/><circle cx="11" cy="11" r="4" fill="#e5e9ef"/></svg></button>
        <div class="tray">
            <button aria-label="Скрытые значки"><svg class="icon" viewBox="0 0 16 16"><path d="M2 11l6-6 6 6" stroke="#fff" stroke-width="1.300"/></svg></button>
            <button aria-label="Сеть"><svg class="icon" viewBox="0 0 16 16"><path d="M5 4.500h10.500v7H3.500V8M9.500 12v3M6 15.500h7M.5 2.500h4v4h-4zM2.500 7v4" stroke="#fff"/></svg></button>
            <button aria-label="Громкость"><svg class="icon" viewBox="0 0 16 16"><path d="M1.500 5.500h2l4-3v11l-4-3h-2z" stroke="#fff"/><path d="M9 6c1 1 1 3 0 4M11 4c2 2 2 6 0 8" stroke="#ccc"/><path d="M13 2c3 3 3 9 0 12" stroke="#777"/></svg></button>
            <button class="lang">ENG</button>
            <button class="clock">20:04<br>01.04.2017</button>
            <button class="notify" aria-label="Центр уведомлений"><svg class="icon" viewBox="0 0 16 16"><path d="M.5 1.500h15v11H11l-3 3-2.500-3h-5z" stroke="#fff"/></svg></button>
        </div>
    </footer>

</body>
</html>
```
FILE: styles.css
```css
* {
    box-sizing: border-box;
}
body {
    margin: 0;
    height: 100vh;
    display: flex;
    flex-direction: column;
    overflow: hidden;
    font-family: "DejaVu Sans Condensed", "Liberation Sans", sans-serif;
    font-size: 11px;
    line-height: 16px;
    color: #1c1c24;
    background-color: #e4e5e7;
}
button {
    font: inherit;
    color: inherit;
    padding: 0;
    border: none;
    background: none;
    display: flex;
    align-items: center;
    justify-content: center;
    white-space: nowrap;
}
h1, h2 {
    margin: 0;
    font-weight: normal;
    white-space: nowrap;
}
svg {
    fill: none;
    stroke: #00008b;
    display: block;
    flex: none;
}
symbol, .plain, .task svg {
    stroke: none;
}
.sprite {
    position: absolute;
    width: 0;
    height: 0;
}
.icon {
    width: 16px;
    height: 16px;
}
.gray {
    stroke: #999;
}
.faint {
    stroke: #ccc;
}

/* title and menu */
.titlebar {
    height: 23px;
    display: flex;
    align-items: center;
    gap: 5px;
    padding: 0 2px 2px;
    background-color: #fff;
}
.titlebar h1 {
    font-family: Roboto, sans-serif;
    font-size: 12px;
    color: #000;
}
.window-buttons {
    margin-left: auto;
    display: flex;
}
.window-buttons button {
    width: 46px;
    height: 21px;
}
.menubar {
    height: 25px;
    padding-left: 4px;
    display: flex;
    align-items: center;
    gap: 14px;
    color: #3c3c4c;
}
.menubar .grip {
    margin-right: -10px;
}
.grip {
    flex: none;
    width: 8px;
    height: 16px;
    background: radial-gradient(circle at 4px 2px, #aaa 1px, transparent 1px) 0 0 / 8px 4px;
}

/* toolbars */
.toolbars {
    height: 25px;
    display: flex;
    gap: 3px;
    padding-left: 5px;
}
.toolbar {
    height: 25px;
    display: flex;
    align-items: center;
    border-bottom: 1px solid #9a9c9f;
    border-radius: 4px;
    background: linear-gradient(#fff, #fafafb 50%, #e4e6ea);
}
.tool {
    flex: none;
    width: 22px;
    height: 22px;
    border: 1px solid transparent;
    border-radius: 3px;
}
.tool.active {
    background: linear-gradient(#fbd878, #ffe9a0);
    border-color: #b79b5c;
}
.sep {
    flex: none;
    width: 8px;
    height: 14px;
    background: linear-gradient(#aaa, #aaa) center / 1px 100% no-repeat;
}
.drop {
    flex: none;
    width: 13px;
    height: 22px;
}
.toolbar-file .drop {
    width: 12px;
}
.drop::before, .tab-list::before {
    content: "";
    border: 3px solid transparent;
    border-top: 4px solid #000;
    border-bottom: none;
}
.drop-gray::before {
    border-top-color: #888;
}
.combo {
    appearance: none;
    width: 125px;
    height: 20px;
    margin: 0 1px;
    padding: 0 14px 0 3px;
    border: 1px solid #9a9a9a;
    border-radius: 0;
    font: inherit;
    color: #111;
    background: url("data:image/svg+xml,%3Csvg xmlns='http://www.w3.org/2000/svg' width='14' height='18'%3E%3Cpath d='M0 0h14v18H0z' fill='%23e1e2e4'/%3E%3Cpath d='M.5 0v18' stroke='%23aaa'/%3E%3Cpath d='M3 7l4 4 4-4' fill='none' stroke='%23555'/%3E%3C/svg%3E") right center no-repeat #fff;
}
.combo-short {
    width: 60px;
}
.combo-scale {
    width: 66px;
}
.combo-short, .combo-scale {
    padding-left: 5px;
}
.overflow {
    width: 10px;
    height: 25px;
    margin-left: 3px;
    align-items: flex-end;
    padding-bottom: 3px;
    border-radius: 0 4px 4px 0;
    background: linear-gradient(#c4c6ca, #85888e);
}
.overflow::before {
    content: "";
    width: 6px;
    height: 6px;
    background: linear-gradient(#000, #000) top / 6px 1px no-repeat, conic-gradient(from -45deg at 50% 100%, #000 90deg, transparent 0) bottom / 6px 3px no-repeat;
}
.fx {
    color: #00008b;
    font-size: 12px;
}

/* left panel */
.workspace {
    flex: 1;
    min-height: 0;
    display: flex;
}
.compact-panel {
    flex: none;
    width: 26px;
    padding: 4px 1px 0 0;
}
.grip-top {
    display: block;
    height: 6px;
    background: radial-gradient(circle at 2px 3px, #aaa 1px, transparent 1px) 4px 0 / 4px 6px, #f6f7f9;
}
.modes, .tools {
    background: linear-gradient(to right, #fff, #e6e8ed);
}
.modes {
    padding-left: 5px;
}
.modes button {
    width: 20px;
    height: 17px;
}
.modes .icon {
    width: 14px;
    height: 14px;
}
.modes .active {
    background-color: #ffe08a;
    outline: 1px solid #4a76b8;
    outline-offset: -1px;
}
.tools button {
    width: 25px;
    height: 22px;
}
.line {
    display: block;
    height: 8px;
    background: linear-gradient(#aaa, #aaa) center / 14px 1px no-repeat, linear-gradient(to right, #fff, #e6e8ed);
}
.panel-end {
    width: 25px;
    height: 12px;
    justify-content: flex-end;
    padding-right: 3px;
    background: linear-gradient(to right, #85888e, #c4c6ca);
    border-radius: 0 0 4px 4px;
}
.panel-end::before {
    content: "";
    width: 6px;
    height: 6px;
    background: linear-gradient(#000, #000) left / 1px 6px no-repeat, conic-gradient(from 225deg at 100% 50%, #000 90deg, transparent 0) right / 3px 6px no-repeat;
}

/* document tabs */
.document {
    flex: 1;
    min-width: 0;
    display: flex;
    flex-direction: column;
}
.doc-tabs {
    flex: none;
    height: 26px;
    display: flex;
    padding: 3px 0 0 2px;
    border-top: 1px solid #9a9c9f;
    background: linear-gradient(#e6e8ec, #fff);
}
.doc-tab {
    position: relative;
    z-index: 0;
    height: 22px;
    padding-left: 7px;
    gap: 15px;
    justify-content: flex-start;
    color: #111;
}
.doc-tab::before, .doc-tab::after {
    content: "";
    position: absolute;
    z-index: -1;
    inset: 0;
    clip-path: var(--shape);
    background: #777;
}
.doc-tab::after {
    inset: 1px 1px 0 1px;
    background: var(--fill);
}
.tab-blue {
    --shape: polygon(18px 0, 100% 0, 100% 100%, 0 100%);
    --fill: linear-gradient(#eaf8fd 50%, #cfd7f2 50%, #e0eafa);
    width: 185px;
    padding-left: 25px;
}
.tab-yellow {
    --shape: polygon(3px 0, 100% 0, 100% 100%, 0 100%, 0 3px);
    --fill: linear-gradient(#fff0a0 50%, #ffd862 50%, #ffe68c);
    width: 123px;
}
.tab-green {
    --shape: polygon(3px 0, 100% 0, calc(100% - 18px) 100%, 0 100%, 0 3px);
    --fill: linear-gradient(#e4f5cc 50%, #bddc9c 50%, #d4ecb4);
    width: 220px;
}
.tab-red {
    --shape: polygon(18px 0, 100% 0, 100% 100%, 0 100%);
    --fill: linear-gradient(#fbc6c8 50%, #f2999d 50%, #f6b1b4);
    width: 197px;
    margin-left: -18px;
    padding-left: 24px;
    gap: 11px;
    font-weight: bold;
}
.close {
    width: 8px;
    height: 8px;
}
.tab-red .close {
    margin: 0 7px 0 auto;
}
.tab-list {
    margin-left: auto;
    width: 22px;
}
.tab-list::before {
    border-width: 5px 5px 0;
}
.doc-body {
    flex: 1;
    min-height: 0;
    display: flex;
    border: 3px solid #e2bdc0;
    border-top: 1px solid #b99597;
    outline: 1px solid #b99597;
    outline-offset: -1px;
}

/* model tree */
.side {
    flex: none;
    width: 206px;
    padding: 0 6px 0 1px;
    display: flex;
    flex-direction: column;
    border-right: 1px solid #666;
}
.side-title {
    height: 20px;
    display: flex;
    align-items: center;
    padding: 0 1px 0 3px;
    background-color: #bac5d2;
}
.side-title h2 {
    flex: 1;
    font-size: 11px;
}
.side-title button {
    width: 17px;
}
.side-title svg {
    width: 10px;
    height: 10px;
}
.side-tools {
    height: 24px;
    display: flex;
    align-items: center;
    padding-left: 1px;
    background: linear-gradient(#fff, #e4e6ea);
}
.side-tools .tool:first-child {
    margin-right: 2px;
}
.side-tools .drop {
    width: 11px;
}
.side-box {
    flex: 1;
    min-height: 0;
    padding: 3px 3px 3px 2px;
    display: flex;
    flex-direction: column;
    gap: 3px;
    border: 1px solid #888;
    border-left-color: #bbb;
    background-color: #f4f4f4;
}
.tree-box {
    flex: 532;
    min-height: 0;
    display: flex;
    flex-direction: column;
    border: 1px solid #888;
    background-color: #fff;
}
.tree {
    margin: 0;
    list-style: none;
    padding: 0;
    overflow: hidden;
    font-family: "Open Sans", "Noto Sans", sans-serif;
    color: #000;
}
.tree li {
    height: 20px;
    display: flex;
    align-items: center;
    padding-left: 2px;
    white-space: nowrap;
}
.tree li.root {
    padding-left: 0;
}
.tree span {
    padding: 1px 2px;
}
.tree .selected {
    background-color: #efefef;
}
.tree .child {
    padding-left: 4px;
    gap: 7px;
}
.rollback {
    flex: none;
    width: 172px;
    height: 8px;
    margin: -4px 0 0 9px;
}
.hscroll {
    margin-top: auto;
    height: 16px;
    display: flex;
    background-color: #f0f0f0;
}
.hscroll button {
    width: 18px;
}
.hscroll svg {
    width: 6px;
    height: 8px;
}
.track {
    flex: 1;
    padding: 0 14px 0 29px;
}
.thumb {
    display: block;
    height: 16px;
    background-color: #cdcdcd;
}
.relations {
    flex: 223;
    border: 1px solid #888;
    background-color: #efefef;
}
.side-tabs {
    height: 19px;
    padding: 0 0 1px 2px;
    display: flex;
    color: #3c3c4c;
}
.side-tabs button {
    padding: 0 6px;
}
.side-tabs .current {
    padding: 0 3px;
    border: 1px solid #aaa;
    border-top: none;
    border-radius: 0 0 4px 4px;
    background-color: #fff;
}

/* 3D view */
.viewport {
    flex: 1;
    min-width: 0;
    border-top: 1px solid #666;
    border-right: 2px solid #faf0f1;
    background: linear-gradient(#6aa6e4, #b4d2f0 55%, #c9dff4 66%, #fff 98%);
}
.scene {
    width: 100%;
    height: 100%;
}
.part {
    stroke: #000;
    stroke-width: 3px;
}
.axes {
    stroke: none;
    font-family: "Liberation Serif", serif;
    font-size: 13px;
}

/* property panel and status */
.property-panel {
    flex: none;
    display: flex;
    height: 68px;
    padding: 5px 6px 4px 28px;
}
.grip-tall {
    width: 5px;
    background: radial-gradient(circle at 2px 2px, #aaa 1px, transparent 1px) 0 0 / 5px 4px;
}
.property-buttons {
    width: 46px;
    padding: 3px 0;
    display: grid;
    grid-template-columns: 22px 22px;
    grid-auto-rows: 22px;
    background: linear-gradient(to right, #fff, #e4e5e7);
}
.stop {
    font-size: 6px;
    font-weight: bold;
    text-anchor: middle;
    fill: #fff;
    stroke: none;
}
.property-main {
    flex: 1;
    padding-top: 3px;
}
.property-field {
    height: 35px;
    border: 1px solid #85888c;
    background: linear-gradient(#fff 40%, #e6ebef);
    box-shadow: inset 0 0 0 3px #eff1f3;
}
.property-tab {
    height: 20px;
    margin-left: 3px;
    padding: 0 5px 0 2px;
    gap: 1px;
    color: #3c3c4c;
    background-color: #fff;
    border: 1px solid #aaa;
    border-top: none;
    border-radius: 0 0 4px 4px;
}
.statusbar {
    flex: none;
    height: 19px;
    padding: 2px 0 0 5px;
    display: flex;
    align-items: center;
    color: #3c3c4c;
    border-top: 1px solid #999ca0;
    background: linear-gradient(#e9eaec, #c9cbd1);
}
.statusbar::after {
    content: "";
    height: 16px;
    width: 86px;
    margin-left: auto;
    border-left: 1px solid #85888c;
}

/* taskbar */
.taskbar {
    flex: none;
    height: 40px;
    display: flex;
    font-family: "Open Sans", "Noto Sans", sans-serif;
    color: #fff;
    background-color: #252525;
}
.task {
    width: 48px;
    height: 40px;
}
.task.app {
    width: 47px;
    margin-left: 2px;
}
.task:nth-child(4) {
    margin-left: 3px;
}
.task svg {
    width: 22px;
    height: 22px;
}
.running {
    background: linear-gradient(#86b9e8, #86b9e8) bottom / 40px 2px no-repeat;
}
.open {
    background: linear-gradient(#86b9e8, #86b9e8) bottom / 100% 2px no-repeat #4a4b4c;
}
.tray {
    margin-left: auto;
    display: flex;
    padding-right: 12px;
}
.tray button {
    width: 24px;
}
.tray .lang {
    width: 36px;
}
.tray .clock {
    width: 66px;
    line-height: 18px;
}
.tray .notify {
    width: 42px;
}
```
